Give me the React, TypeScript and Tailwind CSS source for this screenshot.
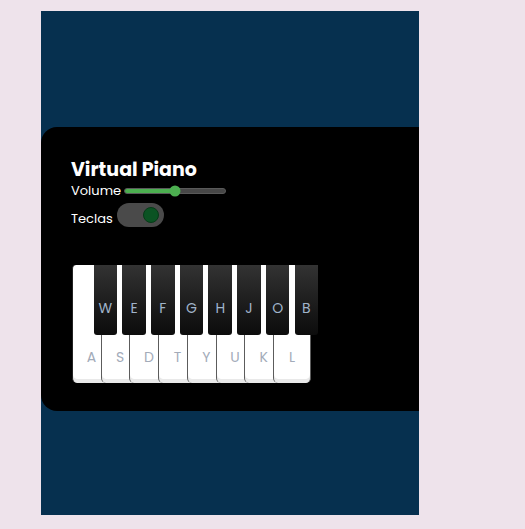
const whiteKeys = ['A', 'S', 'D', 'T', 'Y', 'U', 'K', 'L'];
const blackKeys = ['W', 'E', 'F', 'G', 'H', 'J', 'O', 'B'];

const WhiteKey = ({ label, first, last }: { label: string; first: boolean; last: boolean }) => (
    <div
        className={`w-[38px] h-[118px] shrink-0 bg-white border-l border-[#5c5c5c] rounded-b-[5px] shadow-[inset_0_-4px_0_#e9e9e9] flex items-end justify-center pb-[15px] text-[14px] text-[#a3abb9] ${first ? 'rounded-tl-[4px] border-l-[#222]' : ''} ${last ? 'border-r' : ''}`}
    >
        {label}
    </div>
);

const BlackKey = ({ label }: { label: string }) => (
    <div className="relative z-10 w-[23.5px] h-[70px] shrink-0 -mx-[16.4px] rounded-b-[3px] bg-linear-to-b from-[#333333] to-[#0c0c0c] flex items-end justify-center pb-[16px] text-[14px] text-[#a0b4ca]">
        {label}
    </div>
);

const App = () => {
    return (
        <div className="min-h-screen bg-[#eee3eb] pt-[11px] pl-[41px] font-['Poppins','Open_Sans',sans-serif]">
            <div className="w-[378px] h-[504px] bg-[#06304f] overflow-hidden pt-[116px]">
                {/* Piano card */}
                <div className="w-[420px] h-[284px] bg-black rounded-l-[16px] pl-[30px] pt-[30px]">
                    <h1 className="text-[19px] leading-[26px] font-bold text-white">Virtual Piano</h1>

                    <div className="flex items-center gap-[3px] text-[13px] leading-[16px] text-white">
                        <span>Volume</span>
                        <div className="relative w-[102px] h-[6px] rounded-full bg-[#474747] border border-[#595959]">
                            <div className="h-full w-1/2 rounded-full bg-[#4caf50]" />
                            <div className="absolute left-1/2 top-1/2 -translate-x-1/2 -translate-y-1/2 w-[11px] h-[11px] rounded-full bg-[#4caf50]" />
                        </div>
                    </div>

                    <div className="flex items-end gap-[4px] mt-[4px] text-[13px] leading-[16px] text-white">
                        <span>Teclas</span>
                        <div className="w-[47px] h-[24px] rounded-full bg-[#4a4a4a] flex items-center justify-end pr-[5px]">
                            <div className="w-[16px] h-[16px] rounded-full bg-[#0b5323] border border-[#073a18]" />
                        </div>
                    </div>

                    <div className="flex mt-[38px] ml-[1px]">
                        {whiteKeys.map((w, i) => (
                            <div key={w} className="flex">
                                <WhiteKey label={w} first={i === 0} last={i === whiteKeys.length - 1} />
                                <BlackKey label={blackKeys[i]} />
                            </div>
                        ))}
                    </div>
                </div>
            </div>
        </div>
    );
};

export default App;
